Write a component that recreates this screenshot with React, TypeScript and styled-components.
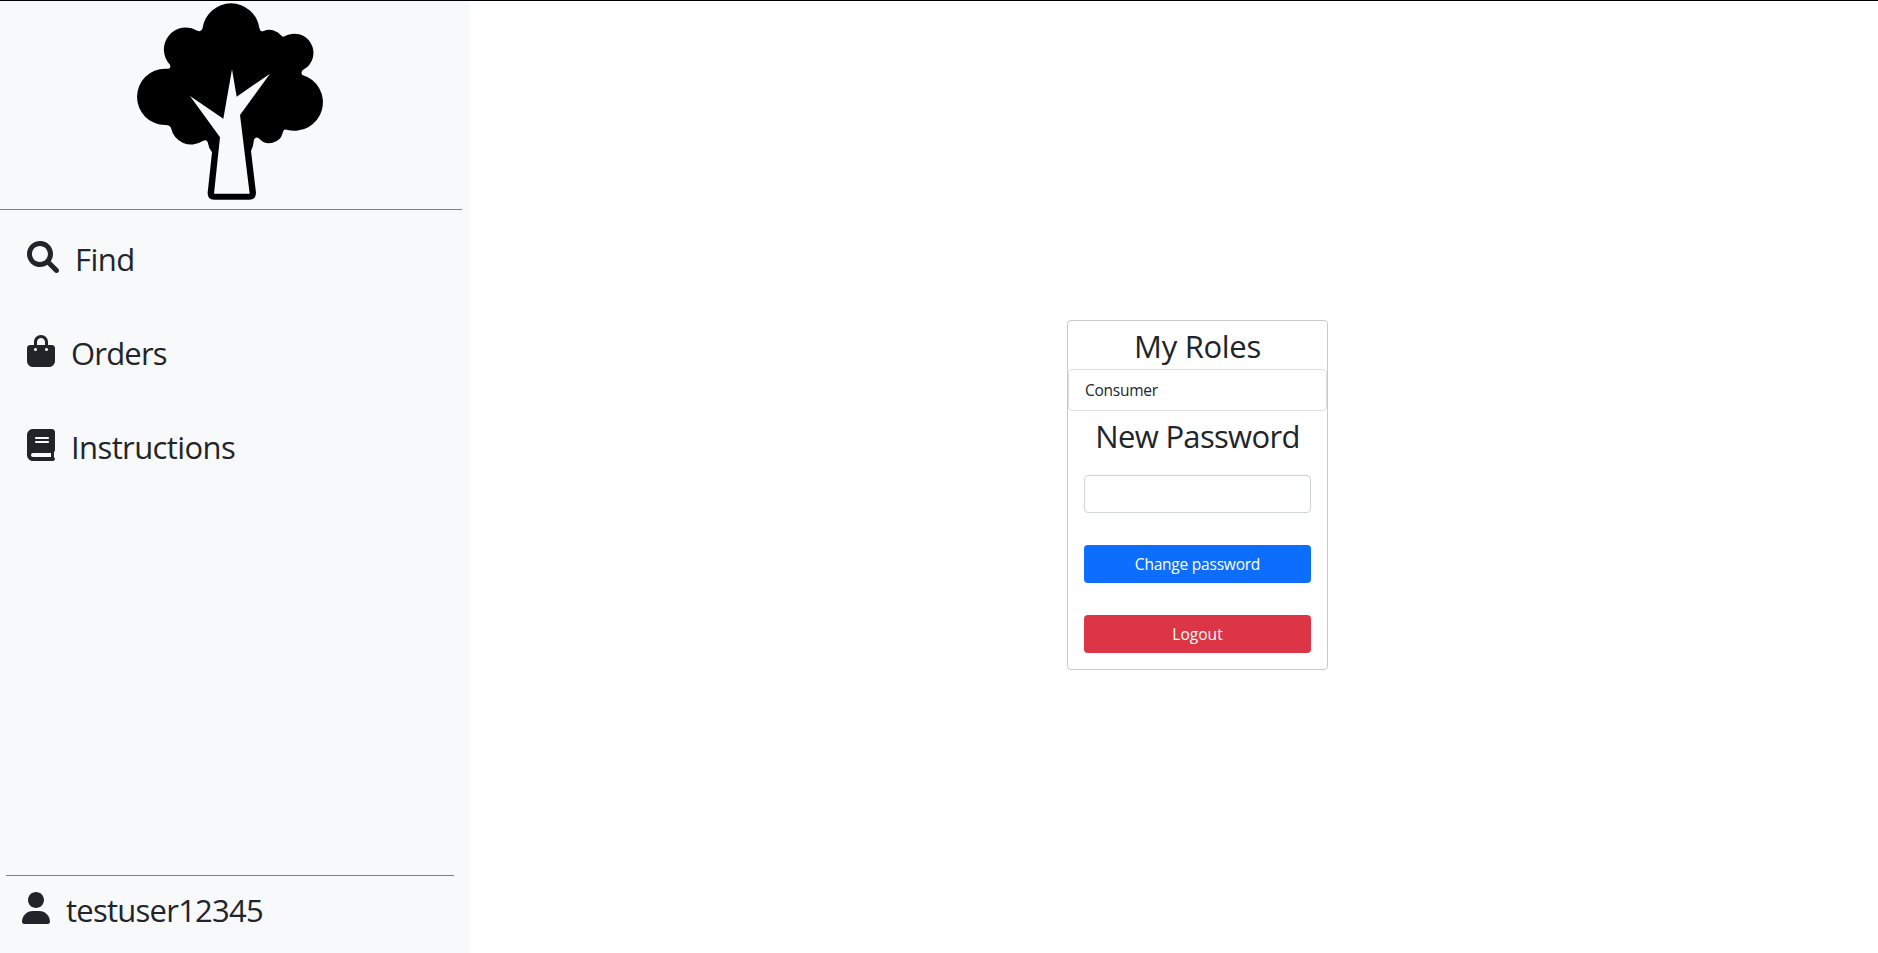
import React from "react";
import styled, { createGlobalStyle } from "styled-components";

const GlobalStyle = createGlobalStyle`
  *, *::before, *::after { box-sizing: border-box; }
  body {
    margin: 0;
    background: #fff;
    color: #212529;
    font-family: "Open Sans", "Noto Sans", sans-serif;
    font-size: 15.5px;
  }
`;

const Page = styled.div`
  display: flex;
  height: 100vh;
  border-top: 1px solid #000;
  overflow: hidden;
`;

const Sidebar = styled.aside`
  display: flex;
  flex-direction: column;
  width: 470px;
  flex: none;
  background: #f8f9fb;
`;

const Brand = styled.div`
  width: 462px;
  height: 209px;
  padding-left: 120px;
  border-bottom: 1px solid #7f8083;
  svg { display: block; }
`;

const Nav = styled.nav`
  display: flex;
  flex-direction: column;
  gap: 58px;
  flex: 1;
  padding: 31px 0 0 27px;
`;

const NavLink = styled.a`
  display: flex;
  align-items: flex-start;
  gap: 16px;
  height: 36px;
`;

const Glyph = styled.svg`
  display: block;
  flex: none;
  height: 32px;
  fill: currentColor;
`;

const Label = styled.span<{ $spacing: number }>`
  font-size: 31px;
  line-height: 36px;
  letter-spacing: ${(p) => p.$spacing}px;
  white-space: nowrap;
`;

const Account = styled.div`
  width: 448px;
  height: 78px;
  margin-left: 6px;
  padding: 16px 0 0 16px;
  border-top: 1px solid #7f8083;
`;

const Main = styled.main`
  flex: 1;
  display: flex;
  justify-content: center;
  align-items: flex-start;
  padding: 319px 0 0 47px;
`;

const Card = styled.section`
  width: 261px;
  border: 1px solid #c8c9ca;
  border-radius: 4px;
`;

const Title = styled.h2<{ $spacing: number }>`
  margin: 0;
  height: 48px;
  padding-top: 2px;
  font-size: 31px;
  font-weight: 400;
  line-height: 46px;
  letter-spacing: ${(p) => p.$spacing}px;
  text-align: center;
  white-space: nowrap;
`;

const RoleList = styled.ul`
  margin: 0;
  padding: 0;
  list-style: none;
  border: 1px solid #dfdfdf;
  border-radius: 4px;
`;

const Role = styled.li`
  padding: 8px 16px;
  line-height: 24px;
  letter-spacing: -0.25px;
`;

const Form = styled.form`
  display: flex;
  flex-direction: column;
  gap: 32px;
  padding: 16px;
`;

const PasswordInput = styled.input`
  width: 100%;
  height: 38px;
  padding: 6px 12px;
  font: inherit;
  border: 1px solid #ced4da;
  border-radius: 4px;
  background: #fff;
`;

const Button = styled.button<{ $color: string; $spacing: number }>`
  height: 38px;
  padding: 0;
  border: 0;
  border-radius: 4px;
  background: ${(p) => p.$color};
  color: #fff;
  font: inherit;
  line-height: 38px;
  letter-spacing: ${(p) => p.$spacing}px;
`;

const TreeLogo = () => (
  <svg width="220" height="208" viewBox="0 3 660 624" aria-label="Tree">
    <path
      fillRule="evenodd"
      d="M247.7 85 A86 86 0 0 1 418.3 85 Q421 97 431 93 A43 43 0 0 1 483 106 Q487 112 494 109
         A57 57 0 0 1 552 208 Q540 215 547 225 A84 84 0 0 1 500 389 Q490 386 488 399
         A41 41 0 0 1 418 416 Q408 407 402 419 Q400 440 393 453 L408 578 Q408 599 388 599
         L282 599 Q262 599 263 578 L276 457 Q266 445 263 426 Q258 417 247 424
         A62 62 0 0 1 153 384 Q149 374 135 375 A84 84 0 0 1 136 206 Q155 208 150 194
         A66 66 0 0 1 232 92 Q245 97 247.7 85 Z
         M336 208 L310 356 L210 288 L300 412 L282 581 L389 581 L360 345 L450 221 L350 290 Z"
    />
  </svg>
);

const icons = {
  search: {
    width: 512,
    d: "M500.3 443.7l-119.7-119.7c27.22-40.41 40.65-90.9 33.46-144.7C401.8 87.79 326.8 13.32 235.2 1.723C99.01-15.51-15.51 99.01 1.724 235.2c11.6 91.64 86.08 166.7 177.6 178.9c53.8 7.189 104.3-6.236 144.7-33.46l119.7 119.7c15.62 15.62 40.95 15.62 56.57 0C515.9 484.7 515.9 459.3 500.3 443.7zM79.1 208c0-70.58 57.42-128 128-128s128 57.42 128 128c0 70.58-57.42 128-128 128S79.1 278.6 79.1 208z",
  },
  bag: {
    width: 448,
    d: "M112 112C112 50.14 162.1 0 224 0C285.9 0 336 50.14 336 112V160H400C426.5 160 448 181.5 448 208V416C448 469 405 512 352 512H96C42.98 512 0 469 0 416V208C0 181.5 21.49 160 48 160H112V112zM160 160H288V112C288 76.65 259.3 48 224 48C188.7 48 160 76.65 160 112V160zM136 256C149.3 256 160 245.3 160 232C160 218.7 149.3 208 136 208C122.7 208 112 218.7 112 232C112 245.3 122.7 256 136 256zM312 208C298.7 208 288 218.7 288 232C288 245.3 298.7 256 312 256C325.3 256 336 245.3 336 232C336 218.7 325.3 208 312 208z",
  },
  book: {
    width: 448,
    d: "M448 336v-288C448 21.49 426.5 0 400 0H96C42.98 0 0 42.98 0 96v320c0 53.02 42.98 96 96 96h320c17.67 0 32-14.33 32-31.1c0-11.72-6.607-21.52-16-27.1v-81.36C441.8 362.8 448 350.2 448 336zM143.1 128h192C344.8 128 352 135.2 352 144C352 152.8 344.8 160 336 160H143.1C135.2 160 128 152.8 128 144C128 135.2 135.2 128 143.1 128zM143.1 192h192C344.8 192 352 199.2 352 208C352 216.8 344.8 224 336 224H143.1C135.2 224 128 216.8 128 208C128 199.2 135.2 192 143.1 192zM384 448H96c-17.67 0-32-14.33-32-32c0-17.67 14.33-32 32-32h288V448z",
  },
  user: {
    width: 448,
    d: "M224 256c70.7 0 128-57.31 128-128s-57.3-128-128-128C153.3 0 96 57.31 96 128S153.3 256 224 256zM274.7 304H173.3C77.61 304 0 381.6 0 477.3c0 19.14 15.52 34.67 34.66 34.67h378.7C432.5 512 448 496.5 448 477.3C448 381.6 370.4 304 274.7 304z",
  },
};

const Icon = ({ name }: { name: keyof typeof icons }) => {
  const { width, d } = icons[name];
  return (
    <Glyph width={width / 16} viewBox={`0 0 ${width} 512`} aria-hidden="true">
      <path d={d} />
    </Glyph>
  );
};

const links: { text: string; icon: keyof typeof icons; spacing: number }[] = [
  { text: "Find", icon: "search", spacing: -0.5 },
  { text: "Orders", icon: "bag", spacing: -0.8 },
  { text: "Instructions", icon: "book", spacing: -0.6 },
];

export default function App() {
  return (
    <>
      <GlobalStyle />
      <Page>
        <Sidebar>
          <Brand>
            <TreeLogo />
          </Brand>
          <Nav>
            {links.map(({ text, icon, spacing }) => (
              <NavLink key={text}>
                <Icon name={icon} />
                <Label $spacing={spacing}>{text}</Label>
              </NavLink>
            ))}
          </Nav>
          <Account>
            <NavLink>
              <Icon name="user" />
              <Label $spacing={-0.75}>testuser12345</Label>
            </NavLink>
          </Account>
        </Sidebar>
        <Main>
          <Card>
            <Title $spacing={-0.3}>My Roles</Title>
            <RoleList>
              <Role>Consumer</Role>
            </RoleList>
            <Title $spacing={-0.68}>New Password</Title>
            <Form>
              <PasswordInput type="password" aria-label="New Password" />
              <Button type="button" $color="#0d6efd" $spacing={-0.22}>Change password</Button>
              <Button type="button" $color="#dc3545" $spacing={0.05}>Logout</Button>
            </Form>
          </Card>
        </Main>
      </Page>
    </>
  );
}
